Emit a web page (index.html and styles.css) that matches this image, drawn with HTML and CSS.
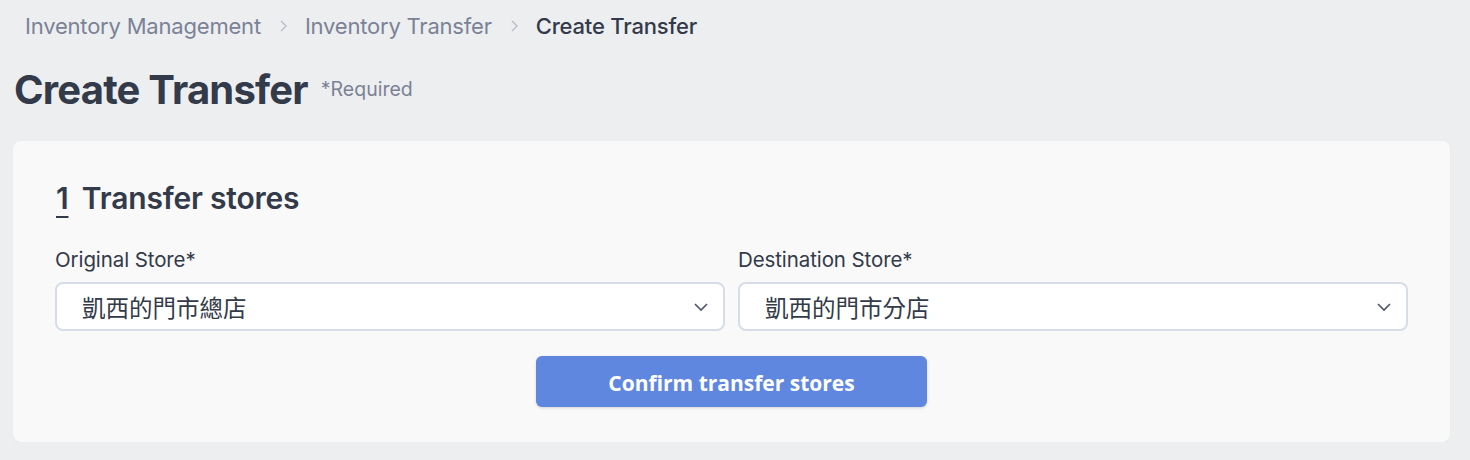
FILE: index.html
```html
<!DOCTYPE html>
<html>
    <head>
        <title>Create Transfer</title>
        <link rel="stylesheet" href="styles.css">
    </head>
    <body>
        <div class="crumbs">
            <span class="crumb">Inventory Management</span>
            <svg class="sep" width="10" height="14" viewBox="0 0 10 14"><path d="M3 2l5 5-5 5" fill="none" stroke="#b5bac4" stroke-width="1.3"/></svg>
            <span class="crumb">Inventory Transfer</span>
            <svg class="sep" width="10" height="14" viewBox="0 0 10 14"><path d="M3 2l5 5-5 5" fill="none" stroke="#b5bac4" stroke-width="1.3"/></svg>
            <span class="crumb current">Create Transfer</span>
        </div>

        <div class="title-row">
            <h1 class="title">Create Transfer</h1>
            <span class="required">*Required</span>
        </div>

        <div class="card">
            <h2 class="step"><span class="num">1</span> Transfer stores</h2>
            <div class="fields">
                <div class="field">
                    <div class="label">Original Store*</div>
                    <div class="select">
                        <span>凱西的門市總店</span>
                        <svg width="16" height="10" viewBox="0 0 16 10"><path d="M2 2l6 6 6-6" fill="none" stroke="#4d5468" stroke-width="1.6"/></svg>
                    </div>
                </div>
                <div class="field">
                    <div class="label">Destination Store*</div>
                    <div class="select">
                        <span>凱西的門市分店</span>
                        <svg width="16" height="10" viewBox="0 0 16 10"><path d="M2 2l6 6 6-6" fill="none" stroke="#4d5468" stroke-width="1.6"/></svg>
                    </div>
                </div>
            </div>
            <div class="actions">
                <div class="button">Confirm transfer stores</div>
            </div>
        </div>
    </body>
</html>
```

FILE: styles.css
```css
body {
    margin: 0;
    padding: 0 20px 0 13px;
    background: #edeef0;
    font-family: Inter, "Noto Sans CJK TC", sans-serif;
    color: #333a4a;
}
.crumbs {
    display: flex;
    align-items: center;
    gap: 15px;
    padding: 12px 0 0 12px;
    height: 28px;
    font-size: 22px;
    letter-spacing: -0.2px;
}
.crumb {
    color: #7b8296;
}
.crumb.current {
    color: #333a4a;
    font-weight: 500;
}
.sep {
    margin: 0 2px;
}
.title-row {
    display: flex;
    align-items: baseline;
    margin-top: 22px;
    padding-left: 1px;
}
.title {
    margin: 0;
    font-size: 40px;
    font-weight: 700;
    letter-spacing: -0.8px;
    line-height: 56px;
}
.required {
    margin-left: 13px;
    font-size: 19.5px;
    color: #7b8296;
    position: relative;
    top: -8px;
}
.card {
    margin-top: 23px;
    background: #f9f9f9;
    border-radius: 8px;
    padding: 37px 42px 35px 42px;
    box-shadow: 0 1px 2px rgba(0, 0, 0, 0.04);
}
.step {
    margin: 0;
    font-size: 30px;
    font-weight: 600;
    line-height: 40px;
    letter-spacing: -0.2px;
}
.num {
    text-decoration: underline;
    text-underline-offset: 7px;
    text-decoration-thickness: 2px;
    margin-right: 6px;
    margin-left: 1px;
}
.fields {
    display: flex;
    gap: 13px;
    margin-top: 29px;
}
.field {
    flex: 1;
}
.label {
    font-size: 20.5px;
    line-height: 26px;
    margin-bottom: 9px;
    letter-spacing: -0.1px;
}
.select {
    display: flex;
    align-items: center;
    justify-content: space-between;
    height: 45px;
    padding: 0 14px 0 25px;
    background: #fff;
    border: 2px solid #d6dde8;
    border-radius: 8px;
    font-size: 23.5px;
    color: #333a4a;
}
.actions {
    display: flex;
    justify-content: center;
    margin-top: 25px;
}
.button {
    width: 391px;
    height: 51px;
    line-height: 54px;
    text-align: center;
    background: #5f87e0;
    color: #fff;
    border-radius: 6px;
    font-family: "Open Sans", sans-serif;
    font-size: 21px;
    font-weight: 700;
    box-shadow: 0 1px 3px rgba(0, 0, 0, 0.15);
}
```
